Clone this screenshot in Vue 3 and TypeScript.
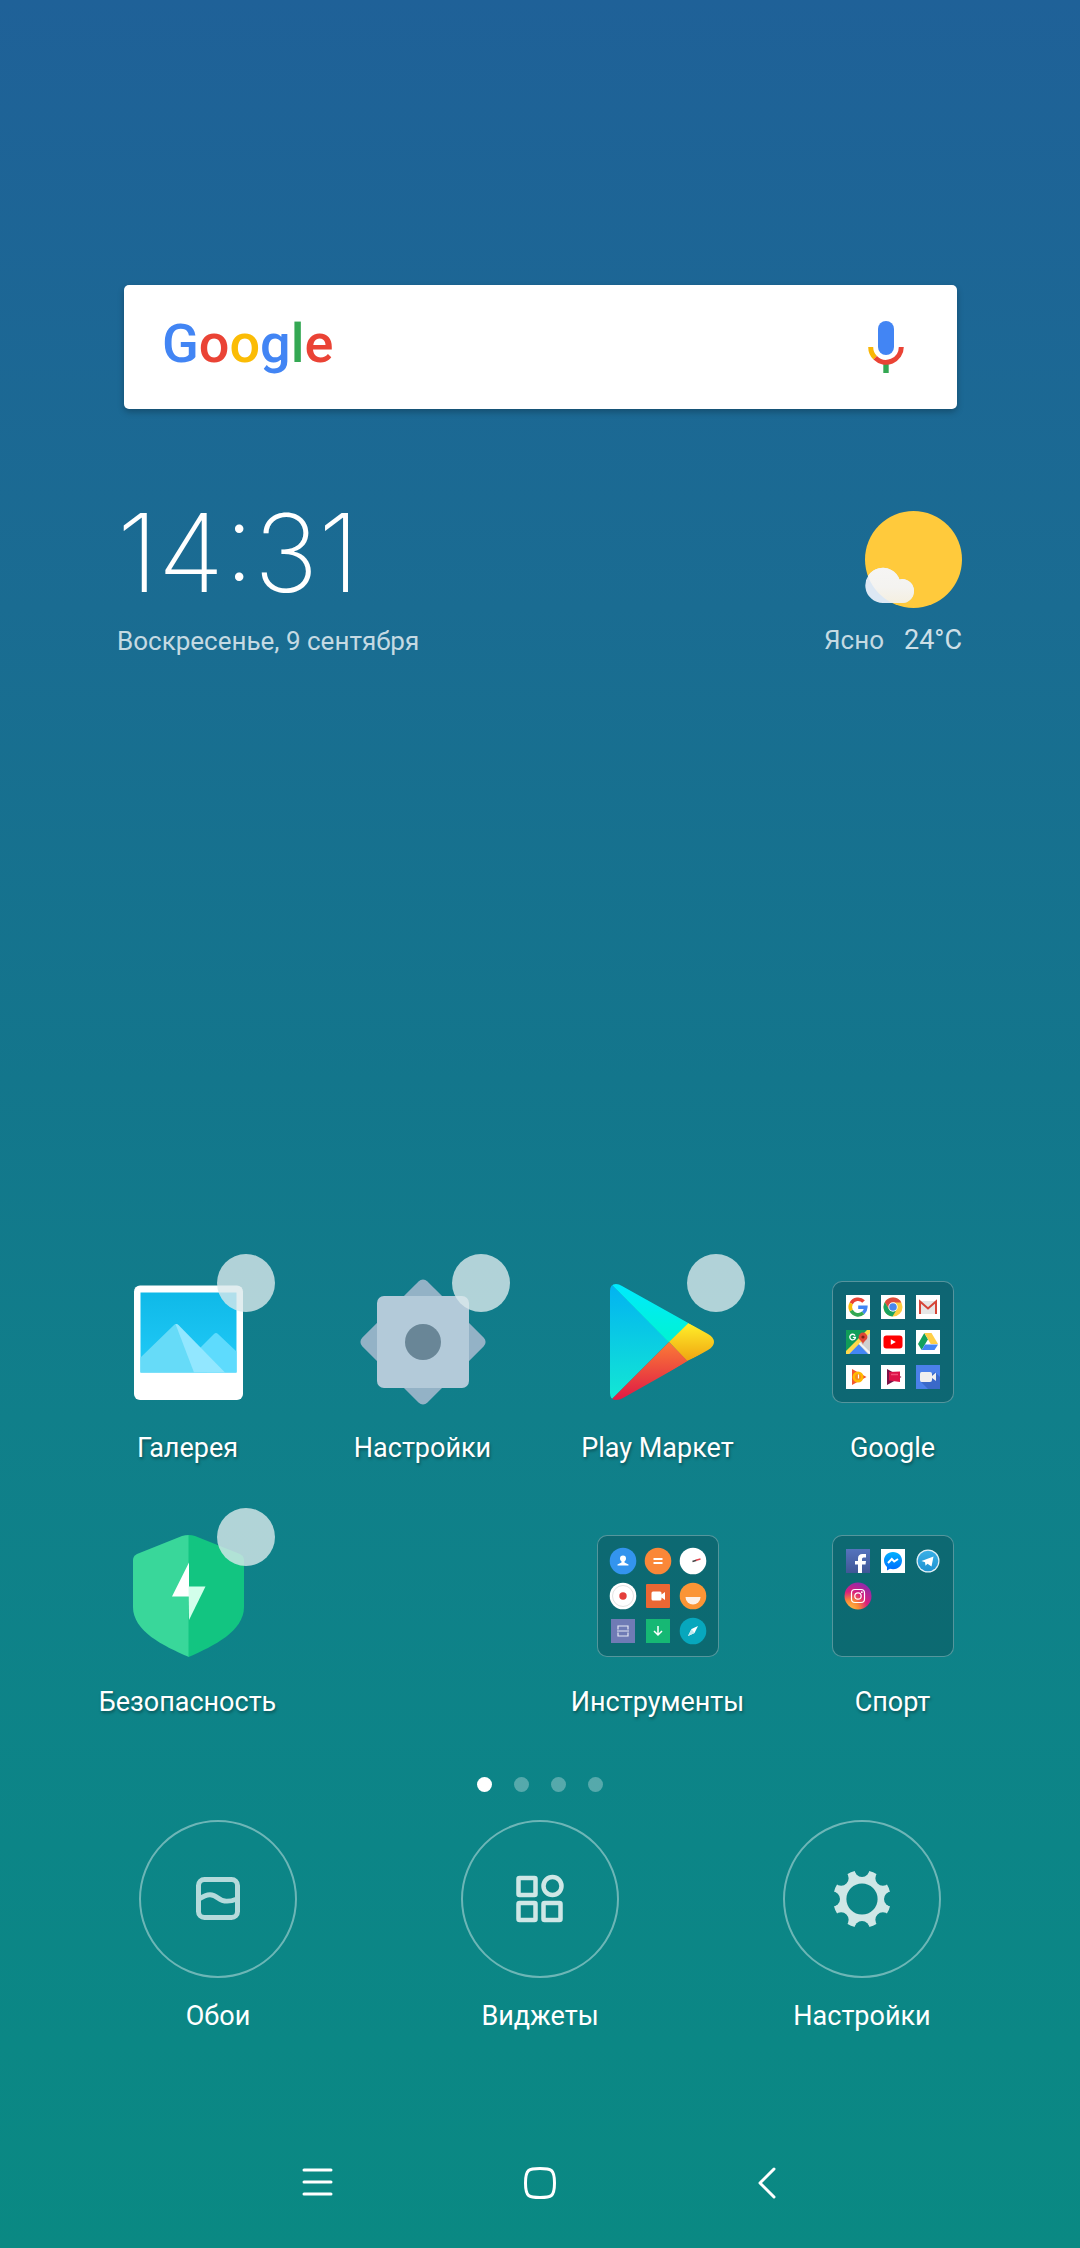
<script setup lang="ts">
interface HomeApp {
  id: string
  label: string
  selectable?: boolean
  folder?: string[]
}

const apps: (HomeApp | null)[] = [
  { id: 'gallery', label: 'Галерея', selectable: true },
  { id: 'settings', label: 'Настройки', selectable: true },
  { id: 'play', label: 'Play Маркет', selectable: true },
  {
    id: 'google',
    label: 'Google',
    folder: ['g', 'chrome', 'gmail', 'maps', 'youtube', 'drive', 'music', 'movies', 'duo'],
  },
  { id: 'security', label: 'Безопасность', selectable: true },
  null,
  {
    id: 'tools',
    label: 'Инструменты',
    folder: ['contacts', 'calc', 'clock', 'recorder', 'screenrec', 'feedback', 'scanner', 'downloads', 'compass'],
  },
  { id: 'sport', label: 'Спорт', folder: ['facebook', 'messenger', 'telegram', 'instagram'] },
]

const wordmark = [
  { ch: 'G', tone: 'blue' },
  { ch: 'o', tone: 'red' },
  { ch: 'o', tone: 'yellow' },
  { ch: 'g', tone: 'blue' },
  { ch: 'l', tone: 'green' },
  { ch: 'e', tone: 'red' },
]

const actions = [
  { id: 'wallpaper', label: 'Обои' },
  { id: 'widgets', label: 'Виджеты' },
  { id: 'prefs', label: 'Настройки' },
]

const pages = 4
const notches = [0, 45, 90, 135, 180, 225, 270, 315]
</script>

<template>
  <div class="home">
    <svg class="sprite" width="0" height="0" aria-hidden="true">
      <defs>
        <linearGradient id="fbFill" x1="0" y1="0" x2="0" y2="1">
          <stop offset="0" stop-color="#5573bd" /><stop offset="1" stop-color="#3f5796" />
        </linearGradient>
        <linearGradient id="msgFill" x1="0" y1="0" x2="0" y2="1">
          <stop offset="0" stop-color="#00b2ff" /><stop offset="1" stop-color="#006aff" />
        </linearGradient>
        <linearGradient id="tgFill" x1="0" y1="0" x2="0" y2="1">
          <stop offset="0" stop-color="#38b0e6" /><stop offset="1" stop-color="#1f93d2" />
        </linearGradient>
        <radialGradient id="igFill" cx="0.2" cy="1" r="1.1">
          <stop offset="0" stop-color="#ffc04a" /><stop offset="0.3" stop-color="#fb8a35" />
          <stop offset="0.6" stop-color="#d9207c" /><stop offset="1" stop-color="#8a2bb0" />
        </radialGradient>
      </defs>

      <symbol id="mini-g" viewBox="0 0 24 24">
        <rect width="24" height="24" fill="#fff" />
        <g fill="none" stroke-width="3.6">
          <path d="M5.2 8.3A7.8 7.8 0 0 1 17.6 6.6" stroke="#ea4335" />
          <path d="M5.2 15.7A7.8 7.8 0 0 1 5.2 8.3" stroke="#fbbc05" />
          <path d="M17.2 17.9A7.8 7.8 0 0 1 5.2 15.7" stroke="#34a853" />
          <path d="M12.2 12.3H19.8A7.8 7.8 0 0 1 17.2 17.9" stroke="#4285f4" />
        </g>
      </symbol>
      <symbol id="mini-chrome" viewBox="0 0 24 24">
        <rect width="24" height="24" fill="#fff" />
        <circle cx="12" cy="12" r="9.5" fill="#ffcd40" />
        <path d="M3.8 7.2A9.5 9.5 0 0 1 20.3 7.6L12 7.6 8 14Z" fill="#dd4b3e" />
        <path d="M3.8 7.2A9.5 9.5 0 0 0 11.5 21.5L16 14 8.2 14.4Z" fill="#1aa260" />
        <circle cx="12" cy="12" r="4.7" fill="#fff" />
        <circle cx="12" cy="12" r="3.8" fill="#4a87ee" />
      </symbol>
      <symbol id="mini-gmail" viewBox="0 0 24 24">
        <rect width="24" height="24" fill="#fff" />
        <path d="M3 6H21V19H3Z" fill="#e6e6e6" />
        <path d="M4 19V6.5L12 13.5L20 6.5V19" fill="none" stroke="#d64537" stroke-width="2" />
      </symbol>
      <symbol id="mini-maps" viewBox="0 0 24 24">
        <rect width="24" height="24" fill="#cfcfcf" />
        <path d="M0 0H24L0 24Z" fill="#109d58" />
        <path d="M3 24L12.5 14L22 24Z" fill="#4386f5" />
        <path d="M0 21L21 0H24V3L3 24H0Z" fill="#ffd94b" />
        <path d="M13.5 13L24 23.5" stroke="#f3f3f3" stroke-width="2" />
        <path d="M9 5.6A2.8 2.8 0 1 0 9.4 7.4H6.8" fill="none" stroke="#fff" stroke-width="1.4" />
        <path d="M17 15C17 11 12.6 10.5 12.6 7A4.4 4.4 0 0 1 21.4 7C21.4 10.5 17 11 17 15Z" fill="#e04636" />
        <circle cx="17" cy="7" r="1.6" fill="#7c2219" />
      </symbol>
      <symbol id="mini-youtube" viewBox="0 0 24 24">
        <rect width="24" height="24" fill="#fff" />
        <rect x="2.5" y="5.5" width="19" height="13" rx="3" fill="#f00" />
        <path d="M9.8 9.2V14.8L14.8 12Z" fill="#fff" />
      </symbol>
      <symbol id="mini-drive" viewBox="0 0 24 24">
        <rect width="24" height="24" fill="#fff" />
        <path d="M8.3 3L12 9.2L5.7 20L2 14Z" fill="#12a15e" />
        <path d="M8.3 3H15.5L22 14H14.7Z" fill="#ffcf48" />
        <path d="M9 14.5H22L18.5 20H5.7Z" fill="#4386f5" />
      </symbol>
      <symbol id="mini-music" viewBox="0 0 24 24">
        <rect width="24" height="24" fill="#fff" />
        <path d="M6 4L20.5 12L6 20Z" fill="#f4572e" />
        <circle cx="12" cy="12" r="5.5" fill="#ffb900" />
        <circle cx="12" cy="12" r="3" fill="#f78b1f" />
        <path d="M12.5 9.5V13.5" stroke="#fff" stroke-width="1.2" />
      </symbol>
      <symbol id="mini-movies" viewBox="0 0 24 24">
        <rect width="24" height="24" fill="#fff" />
        <path d="M6 4L20.5 12L6 20Z" fill="#7b1247" />
        <path d="M8 7L19 6.5V17L8 15.5Z" fill="#dc1247" />
        <path d="M10 9.5H17" stroke="#f24d77" stroke-width="1.5" />
      </symbol>
      <symbol id="mini-duo" viewBox="0 0 24 24">
        <rect width="24" height="24" fill="#4a80ea" />
        <path d="M5 17L12 24H24V12L19 7Z" fill="#3a69c9" />
        <path d="M5.500 7H14Q16 7 16 9V11L20 7.5V16L16 13V15Q16 17 14 17H5.5Q4 17 4 15V9Q4 7 5.5 7Z" fill="#efefef" />
      </symbol>

      <symbol id="mini-contacts" viewBox="0 0 24 24" overflow="visible">
        <circle cx="12" cy="12" r="13.3" fill="#3394ee" />
        <circle cx="12" cy="9.5" r="3" fill="#fff" />
        <path d="M10.5 11H13.5V13.5L17.5 15.5V16.5H6.5V15.5L10.5 13.5Z" fill="#fff" />
      </symbol>
      <symbol id="mini-calc" viewBox="0 0 24 24" overflow="visible">
        <circle cx="12" cy="12" r="13.3" fill="#fa8738" />
        <path d="M7.5 10H16.5M7.5 14H16.5" stroke="#fff" stroke-width="2" />
      </symbol>
      <symbol id="mini-clock" viewBox="0 0 24 24" overflow="visible">
        <circle cx="12" cy="12" r="13.3" fill="#fff" />
        <path d="M11.5 12.5L15.5 11.2" stroke="#444" stroke-width="1.5" />
        <path d="M15 11.3L19.5 10" stroke="#e2434d" stroke-width="1.5" />
      </symbol>
      <symbol id="mini-recorder" viewBox="0 0 24 24" overflow="visible">
        <circle cx="12" cy="12" r="13.3" fill="#fff" />
        <circle cx="12" cy="12" r="10.5" fill="none" stroke="#e3e3e3" />
        <circle cx="12" cy="12" r="3.7" fill="#e43f3b" />
      </symbol>
      <symbol id="mini-screenrec" viewBox="0 0 24 24">
        <rect width="24" height="24" rx="1" fill="#ea6734" />
        <path d="M7 7.5H14Q15.5 7.5 15.5 9V10.5L19 8V16L15.5 13.5V15Q15.5 16.5 14 16.5H7Q5.5 16.5 5.5 15V9Q5.5 7.5 7 7.5Z" fill="#fff" />
      </symbol>
      <symbol id="mini-feedback" viewBox="0 0 24 24" overflow="visible">
        <circle cx="12" cy="12" r="13.3" fill="#fb9535" />
        <path d="M4.5 13H19.5A7.5 7.5 0 0 1 4.5 13Z" fill="#fdf1e6" />
      </symbol>
      <symbol id="mini-scanner" viewBox="0 0 24 24">
        <rect width="24" height="24" fill="#6f7bb5" />
        <path d="M7 10.5V7H17V10.5M7 13.5V17H17V13.5M6 12H18" fill="none" stroke="#e4e7f3" stroke-width="1.2" />
      </symbol>
      <symbol id="mini-downloads" viewBox="0 0 24 24">
        <rect width="24" height="24" fill="#16b874" />
        <path d="M12 7V16M8 12L12 16L16 12" fill="none" stroke="#fff" stroke-width="1.5" />
      </symbol>
      <symbol id="mini-compass" viewBox="0 0 24 24" overflow="visible">
        <circle cx="12" cy="12" r="13.3" fill="#07a7bd" />
        <path d="M17 7L13.5 14L7 17L10.5 10Z" fill="#fff" />
        <path d="M10.5 10L13.5 14L7 17Z" fill="#bfe8ee" />
      </symbol>

      <symbol id="mini-facebook" viewBox="0 0 24 24">
        <rect width="24" height="24" fill="url(#fbFill)" />
        <path d="M12 24V15.500H9V12H12V9.5Q12 5 16.5 5H20V8.5H17.5Q16 8.5 16 10V12H20L19.5 15.5H16V24Z" fill="#fff" />
      </symbol>
      <symbol id="mini-messenger" viewBox="0 0 24 24">
        <rect width="24" height="24" fill="#fff" />
        <path d="M12 3C6.5 3 3 7 3 11.5C3 14.5 4.5 16.5 6 18V21.5L9 19.8C17 21.5 21 16.5 21 11.5C21 7 17.5 3 12 3Z" fill="url(#msgFill)" />
        <path d="M7 14L10.8 10L13.2 12.5L17 10" fill="none" stroke="#fff" stroke-width="2" />
      </symbol>
      <symbol id="mini-telegram" viewBox="0 0 24 24">
        <circle cx="12" cy="12" r="11.5" fill="#e3f1f6" />
        <circle cx="12" cy="12" r="10.3" fill="url(#tgFill)" />
        <path d="M5.5 12L17.5 7.5L15.5 17.5L11.5 14.8L9.5 16.8L9 13.3Z" fill="#fff" />
      </symbol>
      <symbol id="mini-instagram" viewBox="0 0 24 24" overflow="visible">
        <circle cx="12" cy="12" r="13.5" fill="url(#igFill)" />
        <g fill="none" stroke="#fff" stroke-width="1.2">
          <rect x="5.5" y="5.5" width="13" height="13" rx="3.5" />
          <circle cx="12" cy="12" r="3.2" />
        </g>
        <circle cx="15.8" cy="8.2" r="0.9" fill="#fff" />
      </symbol>
    </svg>

    <header class="widgets">
      <div class="search" role="search">
        <button class="wordmark" type="button">
          <span v-for="(l, i) in wordmark" :key="i" :class="l.tone">{{ l.ch }}</span>
        </button>
        <button class="mic" type="button" aria-label="Голосовой поиск">
          <svg width="36" height="52" viewBox="0 0 36 52">
            <rect x="10" y="0" width="16" height="34" rx="8" fill="#4285f4" />
            <path d="M15.3 42H20.7V52H15.3Z" fill="#34a853" />
            <path d="M2.7 26A15.3 15.3 0 0 0 7.2 36.8" fill="none" stroke="#f9b606" stroke-width="5" />
            <path d="M7.2 36.8A15.3 15.3 0 0 0 33.3 26" fill="none" stroke="#ea4335" stroke-width="5" />
          </svg>
        </button>
      </div>

      <div class="info">
        <div class="clock">
          <time class="time" datetime="14:31">14:31</time>
          <p class="date">Воскресенье, 9 сентября</p>
        </div>
        <div class="weather">
          <svg width="97" height="97" viewBox="0 0 97 97" aria-hidden="true">
            <defs>
              <linearGradient id="cloud" x1="0" y1="0.57" x2="0" y2="1">
                <stop offset="0" stop-color="#f6f5f4" /><stop offset="0.5" stop-color="#f4f3f0" />
                <stop offset="1" stop-color="#f5eedb" />
              </linearGradient>
              <clipPath id="cloudShape">
                <path d="M18 92A17.6 17.6 0 1 1 34.5 68.5Q36 68 37 68A12 12 0 0 1 37 92Z" />
              </clipPath>
            </defs>
            <circle cx="48.5" cy="48.5" r="48.5" fill="#ffca3c" />
            <g clip-path="url(#cloudShape)">
              <rect y="56" width="50" height="37" fill="#dde8f4" />
              <circle cx="48.5" cy="48.5" r="48.5" fill="url(#cloud)" />
            </g>
          </svg>
          <p class="forecast"><span>Ясно</span><span class="degrees">24°C</span></p>
        </div>
      </div>
    </header>

    <main class="apps">
      <div v-for="(app, i) in apps" :key="i" class="cell">
        <template v-if="app">
          <div class="tile">
            <button
              v-if="app.folder"
              class="folder"
              type="button"
              :aria-labelledby="`label-${app.id}`"
            >
              <svg v-for="m in app.folder" :key="m" class="mini" width="24" height="24">
                <use :href="`#mini-${m}`" />
              </svg>
            </button>

            <button v-else class="icon" type="button" :aria-labelledby="`label-${app.id}`">
              <svg v-if="app.id === 'gallery'" width="122" height="122" viewBox="0 0 122 122">
                <defs>
                  <linearGradient id="sky" x1="0" y1="0" x2="0" y2="1">
                    <stop offset="0" stop-color="#0fb9e8" /><stop offset="1" stop-color="#22cbf8" />
                  </linearGradient>
                </defs>
                <rect x="7" y="4.5" width="109" height="114.5" rx="6" fill="#fff" />
                <rect x="13.5" y="11.5" width="96" height="80" fill="url(#sky)" />
                <path d="M67 91.5V73L87 53Q89 51 91 53L109.5 70.5V91.5Z" fill="#5edbfd" />
                <path d="M13.5 76.5L47 44Q49 42 51 44L80 91.5H13.5Z" fill="#66dbf8" />
                <path d="M48.5 43Q50 42.5 51.5 44L98 91.5H67Z" fill="#92e7ff" />
              </svg>

              <svg v-else-if="app.id === 'settings'" width="122" height="122" viewBox="0 0 122 122">
                <rect x="15" y="15" width="92" height="92" rx="6" fill="#93b2c6" transform="rotate(45 61 61)" />
                <rect x="15" y="15" width="92" height="92" rx="7" fill="#b3cad9" />
                <circle cx="61" cy="61" r="18" fill="#698697" />
              </svg>

              <svg v-else-if="app.id === 'play'" width="122" height="122" viewBox="0 0 122 122">
                <defs>
                  <clipPath id="playShape">
                    <path d="M13 10Q13 3 19 3Q22 3 25 5L111 53Q117 56.5 117 61Q117 65.5 111 69L26 117Q23 119 19 119Q13 119 13 112Z" />
                  </clipPath>
                  <linearGradient id="playBlue" x1="0" y1="0" x2="0" y2="1">
                    <stop offset="0" stop-color="#02b2f2" /><stop offset="1" stop-color="#13e8d3" />
                  </linearGradient>
                  <linearGradient id="playCyan" x1="0" y1="0" x2="0" y2="1">
                    <stop offset="0" stop-color="#00eaff" /><stop offset="1" stop-color="#00f3d2" />
                  </linearGradient>
                  <linearGradient id="playYellow" x1="0" y1="0" x2="0" y2="1">
                    <stop offset="0" stop-color="#fff02a" /><stop offset="1" stop-color="#f0a411" />
                  </linearGradient>
                  <linearGradient id="playRed" x1="0" y1="0" x2="0" y2="1">
                    <stop offset="0" stop-color="#fb7b37" /><stop offset="1" stop-color="#de1745" />
                  </linearGradient>
                </defs>
                <g clip-path="url(#playShape)">
                  <path d="M13 2L72 61L13 120Z" fill="url(#playBlue)" />
                  <path d="M13 2H30L92 42L72 61.5Z" fill="url(#playCyan)" />
                  <path d="M91.5 42L120 56V66L90 80L72 61Z" fill="url(#playYellow)" />
                  <path d="M72 61L90.5 80L26 120H13Z" fill="url(#playRed)" />
                </g>
              </svg>

              <svg v-else width="122" height="122" viewBox="0 0 122 122">
                <path d="M62 0Q58 0 55 1L10 19Q6 21 6 25V72C6 96 36 111 62 122Z" fill="#39d79a" />
                <path d="M61.5 0Q65 0 68 1L113 19Q117 21 117 25V72C117 96 87 111 61.5 122Z" fill="#12c581" />
                <path d="M62 27.5V61.5H45Z" fill="#fff" />
                <path d="M61.5 51.5H78.5L62 85Z" fill="#d2ffeb" />
              </svg>
            </button>

            <input
              v-if="app.selectable"
              class="pick"
              type="checkbox"
              :aria-labelledby="`label-${app.id}`"
            />
          </div>
          <span :id="`label-${app.id}`" class="label shaded">{{ app.label }}</span>
        </template>
      </div>
    </main>

    <div class="pager">
      <span v-for="p in pages" :key="p" class="dot" :class="{ current: p === 1 }"></span>
    </div>

    <section class="dock">
      <button v-for="a in actions" :key="a.id" class="action" type="button">
        <span class="ring">
          <svg v-if="a.id === 'wallpaper'" width="60" height="60" viewBox="0 0 60 60" class="soft">
            <rect x="10.5" y="10.5" width="39" height="38" rx="6" fill="none" stroke="currentColor" stroke-width="5" />
            <path d="M11 30C20 24 25 25 30 29S40 33.5 49 30" fill="none" stroke="currentColor" stroke-width="5" />
          </svg>
          <svg v-else-if="a.id === 'widgets'" width="60" height="60" viewBox="0 0 60 60">
            <g fill="none" stroke="currentColor" stroke-width="4.5">
              <rect x="8.5" y="9" width="17" height="17" rx="1" />
              <circle cx="42.5" cy="17" r="9" />
              <rect x="8.5" y="34" width="17" height="17" rx="1" />
              <rect x="33.5" y="34" width="17" height="17" rx="1" />
            </g>
          </svg>
          <svg v-else width="60" height="60" viewBox="0 0 60 60">
            <mask id="teeth">
              <rect width="60" height="60" fill="#fff" />
              <circle cx="30" cy="30" r="15.6" fill="#000" />
              <circle
                v-for="n in notches"
                :key="n"
                cx="59.5"
                cy="30"
                r="7.5"
                fill="#000"
                :transform="`rotate(${n} 30 30)`"
              />
            </mask>
            <circle cx="30" cy="30" r="29" fill="currentColor" mask="url(#teeth)" />
          </svg>
        </span>
        <span class="label">{{ a.label }}</span>
      </button>
    </section>

    <nav class="nav" aria-label="Системная навигация">
      <button type="button" aria-label="Недавние">
        <svg width="48" height="48" viewBox="0 0 48 48">
          <path d="M13 11H40M13 23H40M13 35H40" />
        </svg>
      </button>
      <button type="button" aria-label="Домой">
        <svg width="48" height="48" viewBox="0 0 48 48">
          <path d="M24 9.5C35 9.5 38.5 10 38.5 24S35 38.5 24 38.5S9.5 38 9.5 24S13 9.5 24 9.5Z" />
        </svg>
      </button>
      <button type="button" aria-label="Назад">
        <svg width="48" height="48" viewBox="0 0 48 48">
          <path d="M33 10L19 24L33 38" />
        </svg>
      </button>
    </nav>
  </div>
</template>

<style>
body {
  margin: 0;
}
</style>

<style scoped>
.home {
  box-sizing: border-box;
  display: flex;
  flex-direction: column;
  min-height: 100vh;
  padding: 285px 0 41px;
  background: linear-gradient(#1f6198 0%, #1a6c92 27%, #13768c 48%, #107f8a 63%, #0c8587 82%, #0a8983 100%);
  color: #fff;
  font-family: Roboto, "Noto Sans", sans-serif;
  font-size: 27px;
  line-height: 36px;
}

.sprite {
  position: absolute;
}

button {
  margin: 0;
  padding: 0;
  border: 0;
  background: none;
  color: inherit;
  font: inherit;
}

p {
  margin: 0;
}

svg {
  display: block;
}

.search {
  display: flex;
  align-items: center;
  justify-content: space-between;
  height: 124px;
  margin: 0 123px 0 124px;
  padding: 0 53px 0 38px;
  box-sizing: border-box;
  border-radius: 5px;
  background: #fff;
  box-shadow: 0 3px 6px rgba(0, 0, 0, 0.25);
}

.wordmark {
  padding-bottom: 6px;
  font-size: 54px;
  font-weight: 500;
  line-height: 64px;
}

.blue {
  color: #4285f4;
}

.red {
  color: #ea4335;
}

.yellow {
  color: #fbbc05;
}

.green {
  color: #34a853;
}

.info {
  display: flex;
  justify-content: space-between;
  margin: 102px 118px 0 117px;
}

.time {
  display: block;
  font-family: Inter, sans-serif;
  font-size: 108px;
  font-weight: 200;
  line-height: 84px;
}

.date {
  margin-top: 28px;
  font-size: 26px;
  color: rgba(255, 255, 255, 0.75);
}

.weather {
  display: flex;
  flex-direction: column;
  align-items: flex-end;
}

.forecast {
  display: flex;
  align-items: baseline;
  gap: 20px;
  margin-top: 14px;
  font-size: 26px;
  color: rgba(255, 255, 255, 0.75);
}

.degrees {
  font-size: 27px;
  color: rgba(255, 255, 255, 0.8);
}

.apps {
  display: grid;
  grid-template-columns: repeat(4, 1fr);
  row-gap: 69px;
  margin-top: auto;
  padding: 0 70px;
}

.cell {
  display: flex;
  flex-direction: column;
  align-items: center;
  gap: 27px;
}

.tile {
  position: relative;
  width: 122px;
  height: 122px;
}

.icon svg {
  overflow: visible;
}

.folder {
  display: grid;
  grid-template-columns: repeat(3, 24px);
  grid-auto-rows: 24px;
  gap: 11px;
  box-sizing: border-box;
  width: 122px;
  height: 122px;
  padding: 13px;
  border: 1px solid rgba(255, 255, 255, 0.3);
  border-radius: 10px;
  background: rgba(10, 70, 80, 0.4);
}

.mini {
  overflow: visible;
}

.pick {
  position: absolute;
  top: -27px;
  right: -26px;
  width: 58px;
  height: 58px;
  margin: 0;
  border-radius: 50%;
  appearance: none;
  background: rgba(218, 233, 235, 0.8);
}

.label {
  white-space: nowrap;
}

.shaded {
  text-shadow: 1px 2px 3px rgba(0, 0, 0, 0.35);
}

.pager {
  display: flex;
  justify-content: center;
  gap: 22px;
  margin-top: 57px;
}

.dot {
  width: 15px;
  height: 15px;
  border-radius: 50%;
  background: rgba(255, 255, 255, 0.3);
}

.dot.current {
  background: #fff;
}

.dock {
  display: grid;
  grid-template-columns: repeat(3, 1fr);
  margin-top: 28px;
  padding: 0 57px;
}

.action {
  display: flex;
  flex-direction: column;
  align-items: center;
  gap: 20px;
}

.ring {
  display: flex;
  align-items: center;
  justify-content: center;
  box-sizing: border-box;
  width: 158px;
  height: 158px;
  border: 2px solid rgba(255, 255, 255, 0.4);
  border-radius: 50%;
  color: #cfe7e6;
}

.soft {
  color: #b5dadb;
}

.nav {
  display: grid;
  grid-template-columns: repeat(3, 1fr);
  justify-items: center;
  margin-top: 125px;
  padding: 0 203px;
}

.nav path {
  fill: none;
  stroke: #fff;
  stroke-width: 3;
  stroke-linecap: round;
  stroke-linejoin: round;
}
</style>
